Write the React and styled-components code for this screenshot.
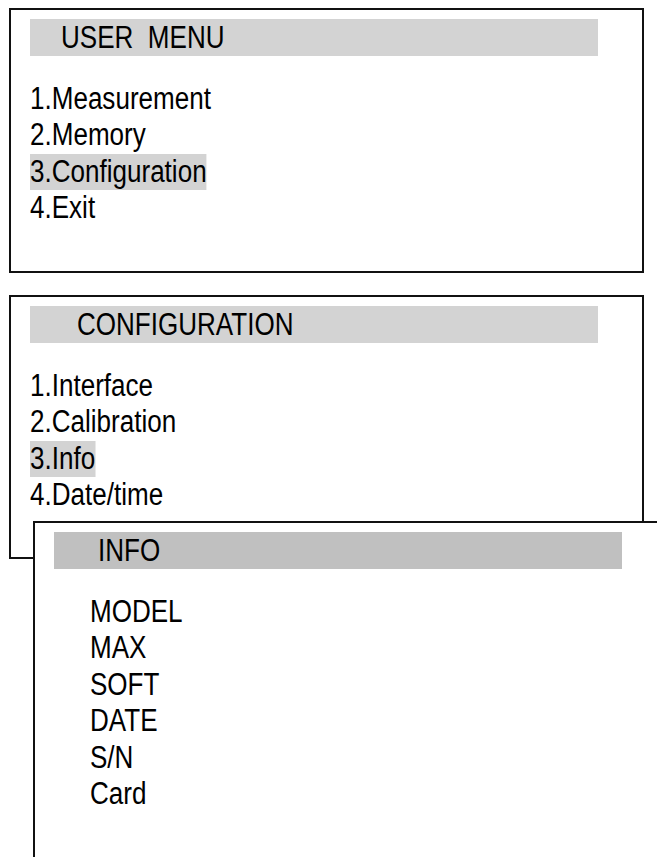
import React from "react";
import styled, { createGlobalStyle } from "styled-components";

const GlobalStyle = createGlobalStyle`
  html, body {
    margin: 0;
    padding: 0;
    background: #ffffff;
    overflow: hidden;
  }
  body {
    font-family: "Liberation Sans Narrow", "Arial Narrow", "Liberation Sans", Arial, sans-serif;
    color: #000;
  }
`;

const Page = styled.div`
  width: 657px;
  height: 857px;
  overflow: hidden;
  box-sizing: border-box;
  padding: 8px 0 0 9px;
  display: flex;
  flex-direction: column;
  gap: 22px;
`;

const Panel = styled.section`
  position: relative;
  box-sizing: border-box;
  width: ${(p) => p.$width || 635}px;
  height: ${(p) => p.$height || 265}px;
  border: 2px solid #111;
  border-bottom-width: ${(p) => (p.$open ? 0 : 2)}px;
  border-right-width: ${(p) => (p.$open ? 0 : 2)}px;
  background: #fff;
  padding: 9px 0 0 19px;
`;

const Overlay = styled(Panel)`
  position: absolute;
  left: 22px;
  top: 224px;
  z-index: 2;
`;

const Header = styled.div`
  width: 568px;
  height: 37px;
  line-height: 37px;
  background: ${(p) => p.$tone || "#d3d3d3"};
  padding-left: ${(p) => p.$indent}px;
  box-sizing: border-box;
  font-size: 31px;
  white-space: pre;
`;

const Narrow = styled.span`
  display: inline-block;
  transform: scaleX(0.84);
  transform-origin: left center;
`;

const List = styled.ul`
  list-style: none;
  margin: 25px 0 0 ${(p) => p.$indent || 0}px;
  padding: 0;
`;

const Item = styled.li`
  font-size: 31px;
  line-height: 36.4px;
  height: 36.4px;
  width: fit-content;
  background: ${(p) => (p.$active ? "#d3d3d3" : "transparent")};
  white-space: pre;
  transform: scaleX(0.84);
  transform-origin: left center;
`;

const Menu = ({ title, indent, tone, items, active, listIndent }) => (
  <>
    <Header $indent={indent} $tone={tone}>
      <Narrow>{title}</Narrow>
    </Header>
    <List $indent={listIndent}>
      {items.map((it, i) => (
        <Item key={it} $active={i === active}>{it}</Item>
      ))}
    </List>
  </>
);

export default function App() {
  return (
    <>
      <GlobalStyle />
      <Page>
        <Panel>
          <Menu
            title="USER  MENU"
            indent={31}
            items={["1.Measurement", "2.Memory", "3.Configuration", "4.Exit"]}
            active={2}
          />
        </Panel>
        <Panel $height={264}>
          <Menu
            title="CONFIGURATION"
            indent={47}
            items={["1.Interface", "2.Calibration", "3.Info", "4.Date/time"]}
            active={2}
          />
          <Overlay $open $width={640} $height={400}>
            <Menu
              title="INFO"
              indent={44}
              tone="#c0c0c0"
              listIndent={36}
              items={["MODEL", "MAX", "SOFT", "DATE", "S/N", "Card"]}
              active={-1}
            />
          </Overlay>
        </Panel>
      </Page>
    </>
  );
}
